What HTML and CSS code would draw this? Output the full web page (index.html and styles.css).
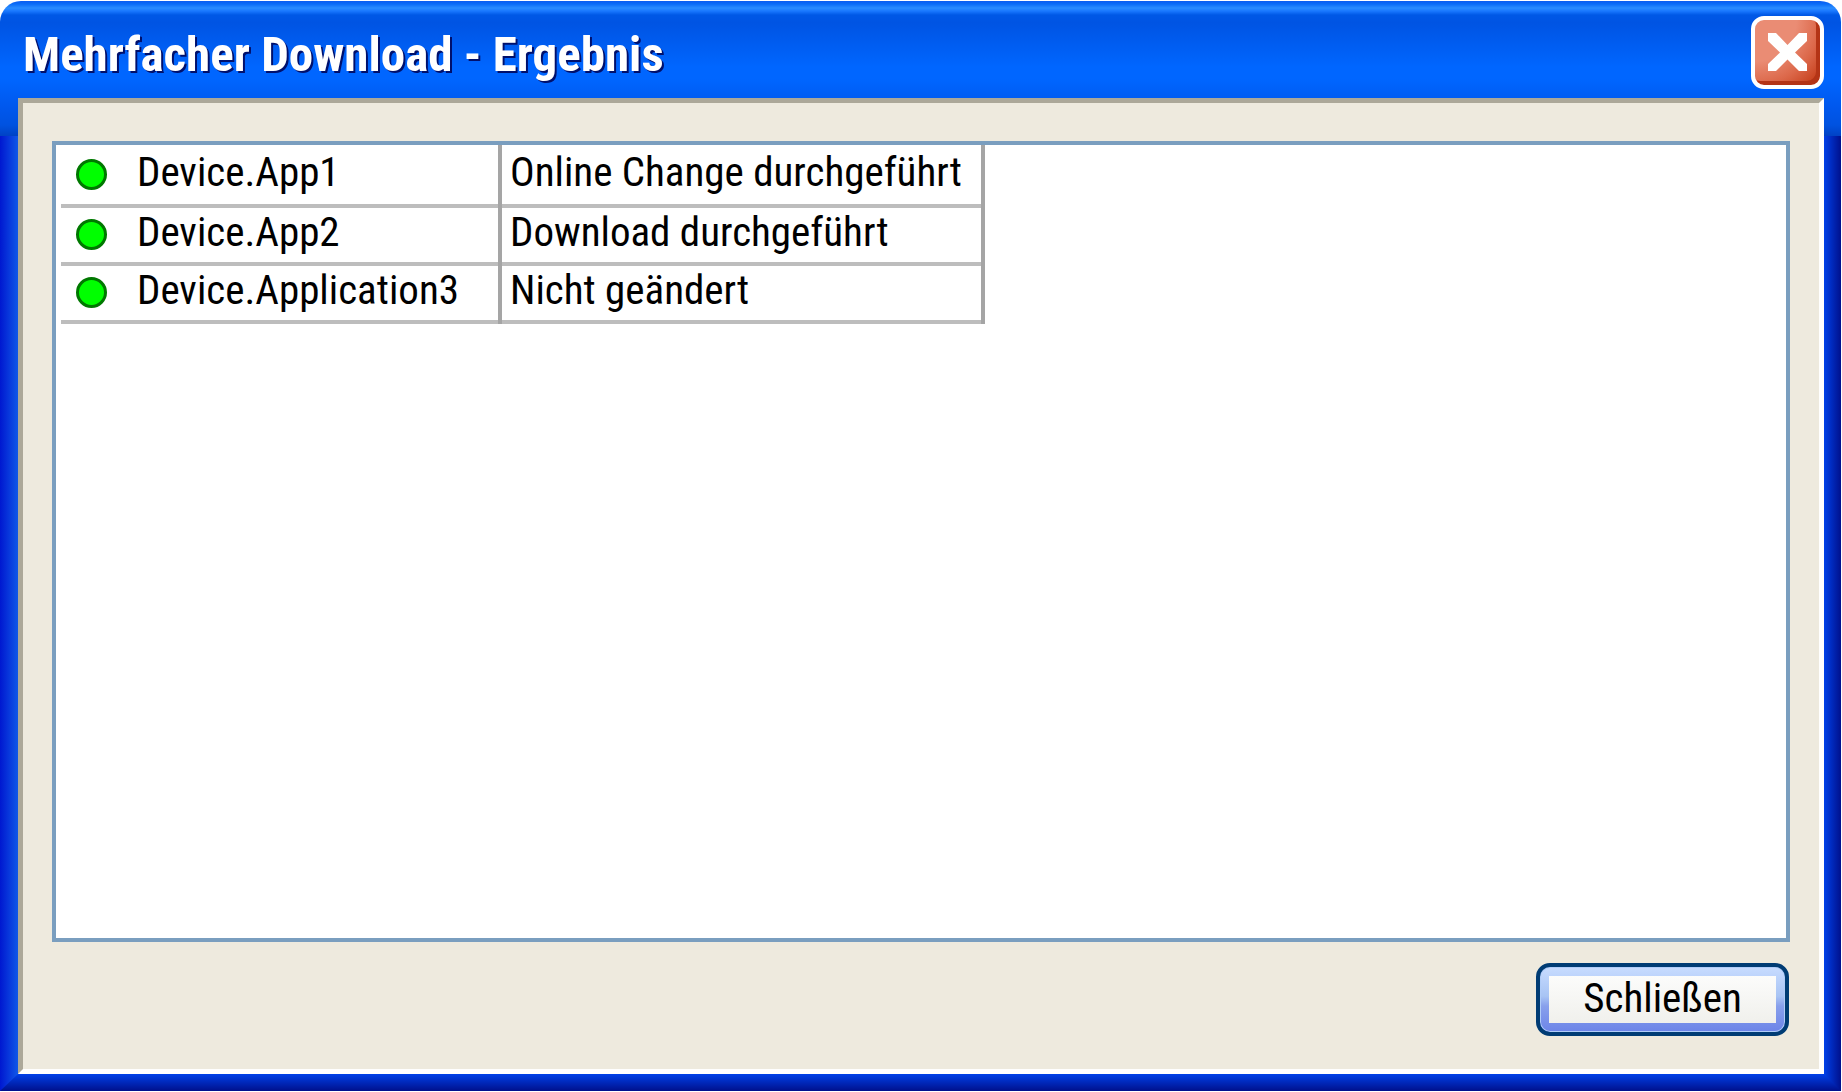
FILE: index.html
```html
<!DOCTYPE html>
<html lang="de">
<head>
<meta charset="utf-8">
<meta name="viewport" content="width=device-width, initial-scale=1">
<title>Mehrfacher Download - Ergebnis</title>
<link rel="stylesheet" href="styles.css">
</head>
<body>
<main class="dialog" role="dialog" aria-labelledby="dialog-title">
  <header class="titlebar">
    <h1 class="title" id="dialog-title">Mehrfacher Download - Ergebnis</h1>
    <button class="close" type="button" aria-label="Fenster schließen">
      <svg class="close-icon" viewBox="0 0 39 39" aria-hidden="true">
        <path d="M0 0H8L19.500 12L31 0H39V8L27 19.500L39 31V38H31L19.500 26.500L8 38H0V31L12 19.500L0 8Z" fill="#fff"/>
      </svg>
    </button>
  </header>
  <section class="client">
    <div class="list">
      <table class="results">
        <tbody>
          <tr>
            <td class="state"><span class="dot" role="img" aria-label="OK"></span></td>
            <td class="name">Device.App1</td>
            <td class="result">Online Change durchgeführt</td>
          </tr>
          <tr>
            <td class="state"><span class="dot" role="img" aria-label="OK"></span></td>
            <td class="name">Device.App2</td>
            <td class="result">Download durchgeführt</td>
          </tr>
          <tr>
            <td class="state"><span class="dot" role="img" aria-label="OK"></span></td>
            <td class="name">Device.Application3</td>
            <td class="result">Nicht geändert</td>
          </tr>
        </tbody>
      </table>
    </div>
    <div class="actions">
      <button class="action" type="button"><span class="action-face">Schließen</span></button>
    </div>
  </section>
  <div class="bottom-edge"></div>
</main>
</body>
</html>
```
FILE: styles.css
```css
* {
  box-sizing: border-box;
}

body {
  margin: 0;
  padding: 1px 1px 1px 0;
  min-height: 100vh;
  display: flex;
  background: #fff;
  color: #000;
  font-family: "Liberation Sans Narrow", "Arial Narrow", "Roboto Condensed", "Liberation Sans", sans-serif;
  font-size: 41px;
  line-height: 44px;
}

button {
  font: inherit;
  color: inherit;
}

.dialog {
  flex: 1;
  display: flex;
  flex-direction: column;
  border-radius: 21px 21px 0 0;
  overflow: hidden;
  background:
    linear-gradient(#0a5cf0 0, #0a6cf8 3px, #2a8cff 7px, #1a78ff 10px, #0058e6 14px, #0054e3 22px, #0066ff 66px, #0066ff 78px, #0058ee 105px, #0052e0 124px, #0042c4 135px) top / 100% 135px no-repeat,
    linear-gradient(90deg, #0018d0, #1058e8) left / 18px 100% no-repeat,
    linear-gradient(90deg, #0040e8, #00108c) right / 17px 100% no-repeat;
}

.titlebar {
  display: flex;
  align-items: flex-start;
  justify-content: space-between;
  height: 97px;
  padding: 15px 17px 0 23px;
}

.title {
  margin: 0;
  padding-top: 11px;
  color: #fff;
  font-size: 49px;
  line-height: 56px;
  font-weight: bold;
  text-shadow: 2px 2px 0 #00106c;
}

.close {
  display: flex;
  align-items: center;
  justify-content: center;
  width: 73px;
  height: 73px;
  padding: 0;
  border: 4px solid #fff;
  border-radius: 13px;
  background: radial-gradient(circle at 0 0, #ea8c74 45%, #dc684a 70%, #c43c18 95%);
  box-shadow: inset -4px -4px 0 #b43416;
}

.close-icon {
  width: 39px;
  height: 39px;
}

.client {
  flex: 1;
  display: flex;
  flex-direction: column;
  gap: 21px;
  margin: 0 17px 0 18px;
  padding: 38px 29px 33px;
  border: 5px solid;
  border-color: #aca899 #fff #fff #aca899;
  background: #eeeade;
}

.list {
  flex: 1;
  border: 4px solid #7a9ebf;
  background: #fff;
  padding-left: 5px;
}

.results {
  border-collapse: collapse;
}

.results td {
  height: 58px;
  padding: 0 0 5px;
  background: linear-gradient(#bdbdbd, #bdbdbd) bottom / 100% 4px no-repeat;
  white-space: nowrap;
}

.results tr:first-child td {
  height: 63px;
}

.results .state {
  width: 76px;
  padding-left: 15px;
}

.results .name,
.results .result {
  padding-bottom: 10px;
  background:
    linear-gradient(#a5a5a5, #a5a5a5) right / 4px 100% no-repeat,
    linear-gradient(#bdbdbd, #bdbdbd) bottom / 100% 4px no-repeat;
}

.results .name {
  width: 365px;
}

.results .result {
  width: 483px;
  padding-left: 8px;
}

.dot {
  display: block;
  width: 31px;
  height: 31px;
  border: 3px solid #007800;
  border-radius: 50%;
  background: #0f0;
}

.actions {
  display: flex;
  justify-content: flex-end;
  padding-right: 1px;
}

.action {
  width: 253px;
  height: 73px;
  padding: 9px;
  border: 4px solid #003c74;
  border-radius: 14px;
  background: linear-gradient(#c8dcff, #a8c4f4 45%, #88a0ec 60%, #6c84e8);
  box-shadow: inset 0 0 0 1px #b0ccf8;
}

.action-face {
  display: block;
  height: 47px;
  line-height: 44px;
  background: linear-gradient(#fcfcfb, #f0f0ec);
}

.bottom-edge {
  height: 17px;
  background: linear-gradient(#0040e8, #00108c);
  clip-path: polygon(0 100%, 18px 0, calc(100% - 17px) 0, 100% 100%);
}
```
